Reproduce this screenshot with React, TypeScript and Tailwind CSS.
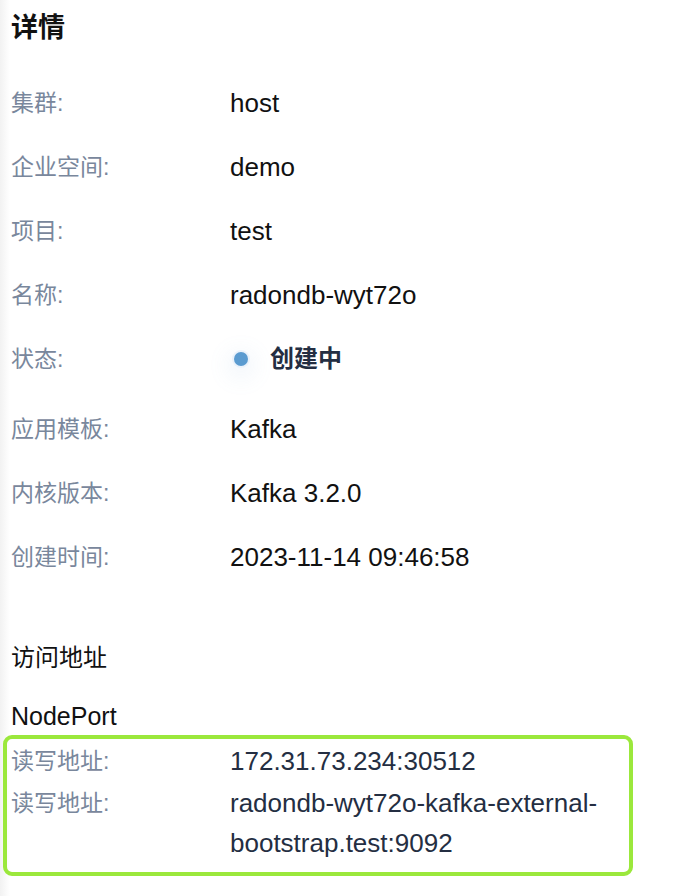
import React from "react";

const rows: { label: string; value: string }[] = [
  { label: "集群:", value: "host" },
  { label: "企业空间:", value: "demo" },
  { label: "项目:", value: "test" },
  { label: "名称:", value: "radondb-wyt72o" },
];

const rows2: { label: string; value: string }[] = [
  { label: "应用模板:", value: "Kafka" },
  { label: "内核版本:", value: "Kafka 3.2.0" },
  { label: "创建时间:", value: "2023-11-14 09:46:58" },
];

function Row({ label, children }: { label: string; children: React.ReactNode }) {
  return (
    <div className="flex h-[64px] items-center">
      <div className="w-[219px] shrink-0 text-[#79879c]">{label}</div>
      <div className="text-[26px] text-[#111111]">{children}</div>
    </div>
  );
}

export default function App() {
  return (
    <div className="min-h-[896px] w-[680px] bg-[linear-gradient(90deg,#f2f2f2_0px,#ffffff_10px)] font-['Liberation_Sans','Noto_Sans_CJK_SC',sans-serif] text-[23px] leading-none">
      <div className="pl-[11px] pt-[10px]">
        <div className="flex h-[36px] items-center text-[27px] font-bold text-[#111111]">详情</div>
        <div className="mt-[25px]">
          {rows.map((r) => (
            <Row key={r.label} label={r.label}>
              {r.value}
            </Row>
          ))}
          <div className="flex h-[70px] items-center pb-[6px]">
            <div className="w-[219px] shrink-0 text-[#79879c]">状态:</div>
            <div className="flex items-center">
              <span className="ml-[4px] mr-[22px] block h-[14px] w-[14px] rounded-full bg-[#5b9bd0] shadow-[0_0_0_2px_#eaf2fb,0_6px_22px_6px_rgba(120,165,215,0.12)]" />
              <span className="text-[24px] font-bold text-[#242e42]">创建中</span>
            </div>
          </div>
          {rows2.map((r) => (
            <Row key={r.label} label={r.label}>
              {r.value}
            </Row>
          ))}
        </div>
        <div className="mt-[52px] flex h-[34px] items-center text-[24px] text-[#111111]">访问地址</div>
        <div className="mt-[24px] flex h-[34px] items-center text-[25px] text-[#111111]">NodePort</div>
      </div>
      <div className="ml-[3px] mt-[2px] w-[630px] rounded-[9px] border-[4px] border-[#9be83c] pb-[9px] pl-[4px] pt-[2px]">
        <div className="flex items-center leading-[40px]">
          <div className="w-[219px] shrink-0 text-[#79879c]">读写地址:</div>
          <div className="text-[26px] text-[#242e42]">172.31.73.234:30512</div>
        </div>
        <div className="mt-[2px] flex leading-[40px]">
          <div className="w-[219px] shrink-0 text-[#79879c]">读写地址:</div>
          <div className="text-[26px] text-[#242e42]">
            radondb-wyt72o-kafka-external-
            <br />
            bootstrap.test:9092
          </div>
        </div>
      </div>
    </div>
  );
}
